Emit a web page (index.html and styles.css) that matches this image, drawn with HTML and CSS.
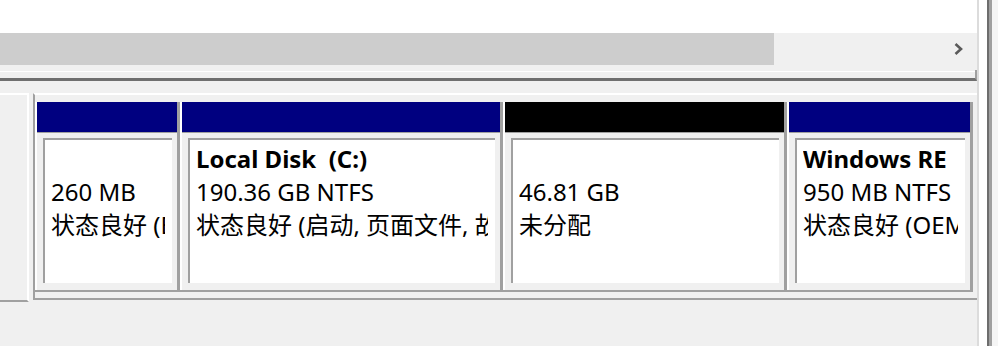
FILE: index.html
```html
<!DOCTYPE html>
<html lang="zh-CN">
<head>
    <meta charset="UTF-8">
    <title>磁盘管理</title>
    <link rel="stylesheet" href="styles.css">
</head>
<body>
    <div class="window">
        <div class="main">
            <div class="list-view"></div>

            <div class="hscroll">
                <div class="thumb"></div>
                <svg class="arrow" width="12" height="14" viewBox="0 0 12 14">
                    <polyline points="2.5,2 8,7 2.5,12" fill="none" stroke="#5a5a5a" stroke-width="2.6"/>
                </svg>
            </div>

            <div class="list-bottom">
                <div class="list-edge"></div>
            </div>

            <div class="graph">
                <div class="disk-label"></div>
                <div class="disk-frame">
                    <div class="part first" style="width: 142px">
                        <div class="part-head"></div>
                        <div class="part-body">
                            <div class="part-box">
                                <div class="part-text">
                                    <div class="line">&nbsp;</div>
                                    <div class="line">260 MB</div>
                                    <div class="line">状态良好 (EFI 系统分区)</div>
                                </div>
                            </div>
                        </div>
                    </div>
                    <div class="part" style="width: 323px">
                        <div class="part-head"></div>
                        <div class="part-body">
                            <div class="part-box">
                                <div class="part-text">
                                    <div class="line name">Local Disk&nbsp; (C:)</div>
                                    <div class="line">190.36 GB NTFS</div>
                                    <div class="line">状态良好 (启动, 页面文件, 故障转储, 主分区)</div>
                                </div>
                            </div>
                        </div>
                    </div>
                    <div class="part" style="width: 284px">
                        <div class="part-head unallocated"></div>
                        <div class="part-body">
                            <div class="part-box">
                                <div class="part-text">
                                    <div class="line">&nbsp;</div>
                                    <div class="line">46.81 GB</div>
                                    <div class="line">未分配</div>
                                </div>
                            </div>
                        </div>
                    </div>
                    <div class="part last" style="width: 189px">
                        <div class="part-head"></div>
                        <div class="part-body">
                            <div class="part-box">
                                <div class="part-text">
                                    <div class="line name">Windows RE</div>
                                    <div class="line">950 MB NTFS</div>
                                    <div class="line">状态良好 (OEM 分区)</div>
                                </div>
                            </div>
                        </div>
                    </div>
                </div>
            </div>
        </div>

        <div class="splitter">
            <div class="split-light"></div>
            <div class="split-white"></div>
            <div class="split-dark"></div>
            <div class="split-mid"></div>
            <div class="split-rest"></div>
        </div>
    </div>
</body>
</html>
```

FILE: styles.css
```css
* {
    margin: 0;
    padding: 0;
    box-sizing: border-box;
}

body {
    background: #f0f0f0;
    font-family: "Noto Sans", "Noto Sans CJK SC", sans-serif;
    font-size: 24px;
    color: #000;
    width: 998px;
    height: 346px;
    overflow: hidden;
}

.window {
    display: flex;
    height: 346px;
}

.main {
    width: 977px;
}

.list-view {
    height: 33px;
    background: #fff;
}

.hscroll {
    height: 32px;
    background: #f0f0f0;
    display: flex;
    align-items: center;
    position: relative;
    width: 977px;
}

.thumb {
    width: 774px;
    height: 32px;
    background: #cdcdcd;
}

.hscroll .arrow {
    position: absolute;
    left: 953px;
    top: 9px;
}

.list-bottom {
    height: 16px;
    padding-top: 5px;
}

.list-edge {
    height: 11px;
    border-right: 2px solid #a0a0a0;
    border-bottom: 3px solid #6f6f6f;
    background: linear-gradient(#f0f0f0 1px, #fff 1px, #fff 2px, #f0f0f0 2px);
}

.graph {
    display: flex;
    padding-top: 12px;
}

.disk-label {
    width: 29px;
    height: 209px;
    margin-right: 4px;
    border-top: 2px solid #fff;
    border-right: 2px solid #fff;
    border-bottom: 2px solid #a0a0a0;
}

.disk-frame {
    width: 944px;
    height: 207px;
    display: flex;
    border-top: 2px solid #fff;
    border-left: 2px solid #a0a0a0;
    border-bottom: 2px solid #a0a0a0;
    padding-top: 7px;
}

.part {
    height: 190px;
    display: flex;
    flex-direction: column;
    background: #fff;
    padding-left: 2px;
    border-left: 3px solid #a0a0a0;
    border-bottom: 2px solid #a0a0a0;
}

.part.first {
    border-left: none;
}

.part.last {
    border-right: 3px solid #a0a0a0;
}

.part-head {
    flex-shrink: 0;
    height: 31px;
    background: #000080;
    border-bottom: 1px solid #a0a0a0;
}

.part-head.unallocated {
    background: #000;
}

.part-body {
    flex: 1;
    min-height: 0;
    display: flex;
    background: #f0f0f0;
    padding: 5px 5px 7px 6px;
}

.part-box {
    flex: 1;
    min-width: 0;
    overflow: hidden;
    background: #fff;
    border-top: 2px solid #a0a0a0;
    border-left: 2px solid #a0a0a0;
    padding: 2px 7px 0 6px;
}

.part-text {
    overflow: hidden;
    white-space: nowrap;
}

.line {
    line-height: 33px;
}

.line.name {
    font-weight: bold;
}

.splitter {
    display: flex;
    width: 21px;
    height: 346px;
}

.split-light {
    width: 2px;
    background: #dcdcdc;
}

.split-white {
    width: 8px;
    background: #fff;
}

.split-dark {
    width: 2px;
    background: #6d6d6d;
}

.split-mid {
    width: 3px;
    background: #a0a0a0;
}

.split-rest {
    flex: 1;
    background: #f5f5f5;
}
```
